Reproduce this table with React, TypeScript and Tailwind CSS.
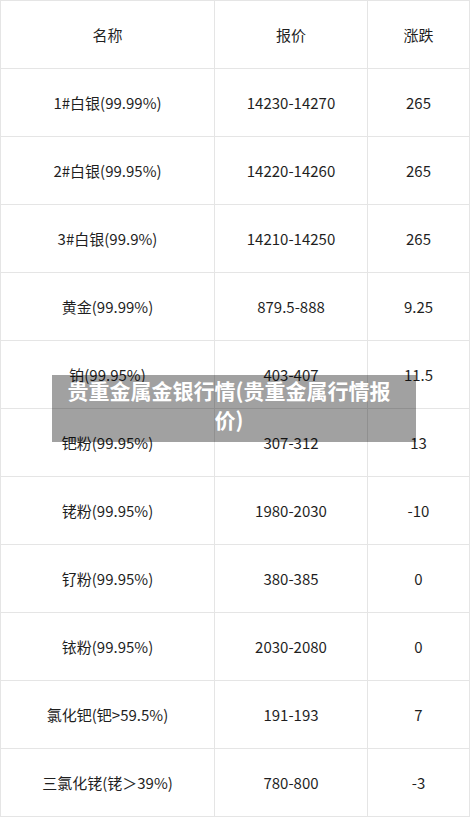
const rows = [
  { name: '1#白银(99.99%)', price: '14230-14270', change: '265' },
  { name: '2#白银(99.95%)', price: '14220-14260', change: '265' },
  { name: '3#白银(99.9%)', price: '14210-14250', change: '265' },
  { name: '黄金(99.99%)', price: '879.5-888', change: '9.25' },
  { name: '铂(99.95%)', price: '403-407', change: '11.5' },
  { name: '钯粉(99.95%)', price: '307-312', change: '13' },
  { name: '铑粉(99.95%)', price: '1980-2030', change: '-10' },
  { name: '钌粉(99.95%)', price: '380-385', change: '0' },
  { name: '铱粉(99.95%)', price: '2030-2080', change: '0' },
  { name: '氯化钯(钯>59.5%)', price: '191-193', change: '7' },
  { name: '三氯化铑(铑＞39%)', price: '780-800', change: '-3' },
]

const cell = 'h-[68px] border border-[#e5e5e5] p-0 pt-px text-center align-middle'

export default function App() {
  return (
    <div className="relative w-[470px] bg-white font-['Noto_Sans_CJK_SC',sans-serif] text-[15px] text-[#1f1f1f]">
      <table className="w-[470px] table-fixed border-collapse">
        <colgroup>
          <col className="w-[214px]" />
          <col className="w-[153px]" />
          <col />
        </colgroup>
        <thead>
          <tr>
            <th className={`${cell} font-normal`}>名称</th>
            <th className={`${cell} font-normal`}>报价</th>
            <th className={`${cell} font-normal`}>涨跌</th>
          </tr>
        </thead>
        <tbody>
          {rows.map((r) => (
            <tr key={r.name}>
              <td className={cell}>{r.name}</td>
              <td className={cell}>{r.price}</td>
              <td className={cell}>{r.change}</td>
            </tr>
          ))}
        </tbody>
      </table>

      {/* title banner laid over the table */}
      <div className="absolute left-[52px] top-[375px] h-[67px] w-[364px] bg-black/[0.37] pl-[12px] pr-[22px] pt-[1px] text-center text-[21px] font-bold leading-[29px] text-white">
        贵重金属金银行情(贵重金属行情报价)
      </div>
    </div>
  )
}
